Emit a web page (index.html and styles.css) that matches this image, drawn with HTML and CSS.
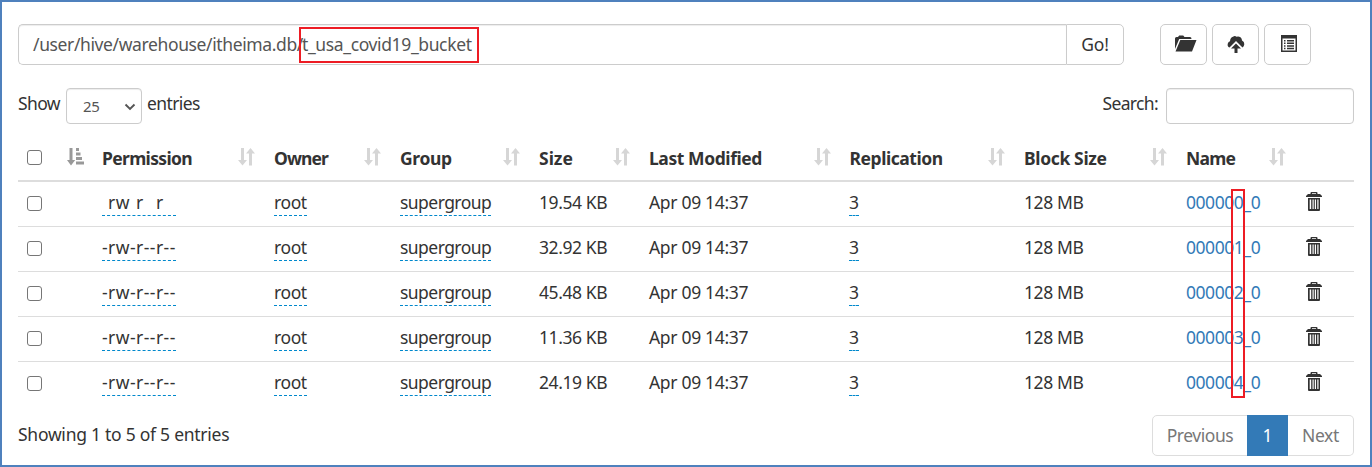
FILE: index.html
```
<!DOCTYPE html>
<html lang="en">
<head>
<meta charset="utf-8">
<title>Browse Directory</title>
<link rel="stylesheet" href="styles.css">
</head>
<body>
<svg class="defs" width="0" height="0">
  <symbol id="sort" viewBox="0 0 17 18"><path d="M3 0h3v12h3l-4.500 5.500L0 12h3zM11 17.500v-12H8L12.500 0 17 5.500h-3v12z"/></symbol>
  <symbol id="sorted" viewBox="0 0 17 18"><path d="M2.500 0h3v12h2.700L4 17.500 0 12h2.500zM9 0h3v3H9zM9 4.500h4.500v3H9zM9 9h6v3H9zM9 13.500h8v3H9z"/></symbol>
  <symbol id="trash" viewBox="0 0 16 19"><path fill-rule="evenodd" d="M4.500 2V1Q4.500 0 5.500 0h5q1 0 1 1v1H14l2 2v1H0V4l2-2zM6 2h4v-.8H6zM2 6h12v12q0 1-1 1H3q-1 0-1-1zM3.700 7.500V17h1.500V7.500zM6.500 7.500V17h1.200V7.500zM8.800 7.500V17H10V7.500zM11.300 7.500V17h1.200V7.500z"/></symbol>
</svg>
<main class="page">
  <div class="toolbar">
    <div class="path"><div class="path-input"><span class="dir">/user/hive/warehouse/itheima.db/</span><span class="leaf">t_usa_covid19_bucket</span></div><button class="go">Go!</button></div>
    <div class="actions">
      <button class="btn"><svg width="23" height="18" viewBox="0 0 23 18"><path d="M1 14V3.500Q1 2 2.500 2H4l1.200-1.500h4L10.500 2H16q1.500 0 1.500 2H5.200zM6.300 5H22.500L18 16.500H1.500z"/></svg></button>
      <button class="btn"><svg width="18" height="18" viewBox="0 0 18 18"><path d="M2.500 12.500Q0 11.500 .8 8.500 1.400 6.500 3 6.200 3.300 2.500 6 1.700 8 .5 9.500 1.800q2-1 4 .5 1.500 1.200 1.500 3.200 2.500 1 2.300 3.800-.3 2.200-1.800 3.200L9 6zM9 8.500l5 5H10.500V18h-3v-4.500H4z"/></svg></button>
      <button class="btn"><svg width="18" height="18" viewBox="0 0 18 18"><path fill-rule="evenodd" d="M1 0h16v17H1zM2.500 3.500v12h13v-12zM4 5h1.500v1.500H4zM7 5h7v1.500H7zM4 7.600h1.500v1.500H4zM7 7.600h7v1.500H7zM4 10.200h1.500v1.500H4zM7 10.200h7v1.500H7zM4 12.800h1.500v1.500H4zM7 12.800h7v1.500H7z"/></svg></button>
    </div>
  </div>
  <div class="controls">
    <label class="length"><span class="show">Show</span><span class="select"><span>25</span><svg width="12" height="8" viewBox="0 0 12 8"><path d="M1.500 1.500L6 6l4.500-4.500" fill="none" stroke="#555" stroke-width="1.900"/></svg></span><span class="ent">entries</span></label>
    <label class="search"><span>Search:</span><span class="field"></span></label>
  </div>
  <div class="table">
    <div class="row head">
      <div class="cell"><i class="check"></i><svg class="sort on"><use href="#sorted"/></svg></div>
      <div class="cell"><b class="h-perm">Permission</b><svg class="sort"><use href="#sort"/></svg></div>
      <div class="cell"><b class="h-owner">Owner</b><svg class="sort"><use href="#sort"/></svg></div>
      <div class="cell"><b class="h-group">Group</b><svg class="sort"><use href="#sort"/></svg></div>
      <div class="cell"><b class="h-size">Size</b><svg class="sort"><use href="#sort"/></svg></div>
      <div class="cell"><b class="h-mod">Last Modified</b><svg class="sort"><use href="#sort"/></svg></div>
      <div class="cell"><b class="h-rep">Replication</b><svg class="sort"><use href="#sort"/></svg></div>
      <div class="cell"><b class="h-block">Block Size</b><svg class="sort"><use href="#sort"/></svg></div>
      <div class="cell"><b class="h-name">Name</b><svg class="sort"><use href="#sort"/></svg></div>
      <div class="cell"></div>
    </div>
    <div class="row first"><div class="cell"><i class="check"></i></div><div class="cell"><span class="edit perm"><s>-</s>rw<s>-</s>r<s>--</s>r<s>--</s></span></div><div class="cell"><span class="edit owner">root</span></div><div class="cell"><span class="edit group">supergroup</span></div><div class="cell"><span class="size">19.54 KB</span></div><div class="cell"><span class="mod">Apr 09 14:37</span></div><div class="cell"><span class="edit rep">3</span></div><div class="cell"><span class="block">128 MB</span></div><div class="cell"><a class="name">000000_0</a></div><div class="cell"><svg class="trash"><use href="#trash"/></svg></div></div>
    <div class="row"><div class="cell"><i class="check"></i></div><div class="cell"><span class="edit perm">-rw-r--r--</span></div><div class="cell"><span class="edit owner">root</span></div><div class="cell"><span class="edit group">supergroup</span></div><div class="cell"><span class="size">32.92 KB</span></div><div class="cell"><span class="mod">Apr 09 14:37</span></div><div class="cell"><span class="edit rep">3</span></div><div class="cell"><span class="block">128 MB</span></div><div class="cell"><a class="name">000001_0</a></div><div class="cell"><svg class="trash"><use href="#trash"/></svg></div></div>
    <div class="row"><div class="cell"><i class="check"></i></div><div class="cell"><span class="edit perm">-rw-r--r--</span></div><div class="cell"><span class="edit owner">root</span></div><div class="cell"><span class="edit group">supergroup</span></div><div class="cell"><span class="size">45.48 KB</span></div><div class="cell"><span class="mod">Apr 09 14:37</span></div><div class="cell"><span class="edit rep">3</span></div><div class="cell"><span class="block">128 MB</span></div><div class="cell"><a class="name">000002_0</a></div><div class="cell"><svg class="trash"><use href="#trash"/></svg></div></div>
    <div class="row"><div class="cell"><i class="check"></i></div><div class="cell"><span class="edit perm">-rw-r--r--</span></div><div class="cell"><span class="edit owner">root</span></div><div class="cell"><span class="edit group">supergroup</span></div><div class="cell"><span class="size">11.36 KB</span></div><div class="cell"><span class="mod">Apr 09 14:37</span></div><div class="cell"><span class="edit rep">3</span></div><div class="cell"><span class="block">128 MB</span></div><div class="cell"><a class="name">000003_0</a></div><div class="cell"><svg class="trash"><use href="#trash"/></svg></div></div>
    <div class="row"><div class="cell"><i class="check"></i></div><div class="cell"><span class="edit perm">-rw-r--r--</span></div><div class="cell"><span class="edit owner">root</span></div><div class="cell"><span class="edit group">supergroup</span></div><div class="cell"><span class="size">24.19 KB</span></div><div class="cell"><span class="mod">Apr 09 14:37</span></div><div class="cell"><span class="edit rep">3</span></div><div class="cell"><span class="block">128 MB</span></div><div class="cell"><a class="name">000004_0</a></div><div class="cell"><svg class="trash"><use href="#trash"/></svg></div></div>
  </div>
  <div class="footer">
    <span class="info">Showing 1 to 5 of 5 entries</span>
    <div class="pager"><span class="prev">Previous</span><span class="current">1</span><span class="next">Next</span></div>
  </div>
  <div class="mark mark-path"></div>
  <div class="mark mark-names"></div>
</main>
</body>
</html>
```
FILE: styles.css
```
* { box-sizing: border-box; }
body { margin: 0; font: 17.5px/24px "Noto Sans", sans-serif; color: #333; background: #fff; }
.defs { position: absolute; }
svg { display: block; fill: #333; }
.page { position: relative; width: 1372px; height: 467px; border: 2px solid #4f81bd; padding: 22px 16px 0; overflow: hidden; white-space: nowrap; }
button { font: inherit; color: inherit; background: #fff; border: 1px solid #ccc; padding: 0; }
.toolbar { display: flex; height: 41px; }
.path { display: flex; width: 1106px; }
.path-input { flex: 1; display: flex; align-items: center; padding: 0 0 2px 14px; border: 1px solid #ccc; border-right: 0; border-radius: 5px 0 0 5px; box-shadow: inset 0 1px 1px rgba(0,0,0,.075); color: #555; }
.dir { width: 269px; letter-spacing: -.38px; }
.leaf { letter-spacing: -.37px; }
.go { width: 58px; border-radius: 0 5px 5px 0; letter-spacing: -.1px; padding-bottom: 2px; }
.actions { display: flex; gap: 5px; margin-left: 36px; }
.btn { width: 47px; border-radius: 5px; display: flex; align-items: center; justify-content: center; padding: 0 0 1px 4px; }
.btn + .btn { padding-left: 0; }
.btn + .btn + .btn { padding-left: 2px; }
.controls { display: flex; justify-content: space-between; margin-top: 23px; height: 36px; }
.length, .search { display: flex; }
.length > span, .search > span { line-height: 31px; }
.show { width: 48px; letter-spacing: -.6px; }
.select { display: flex; align-items: center; justify-content: space-between; width: 76px; border: 1px solid #ccc; border-radius: 4px; padding: 0 5px 0 16px; font-size: 15px; letter-spacing: -.4px; color: #555; box-shadow: inset 0 1px 1px rgba(0,0,0,.075); }
.select svg { margin-top: 2px; }
.ent { margin-left: 5px; letter-spacing: -.6px; }
.search { letter-spacing: -.65px; }
.field { width: 188px; margin-left: 8px; border: 1px solid #ccc; border-radius: 4px; box-shadow: inset 0 1px 1px rgba(0,0,0,.075); }
.table { margin-top: 11px; }
.row { display: grid; grid-template-columns: 74px 172px 126px 139px 110px 201px 174px 162px 121px 57px; height: 45px; border-top: 1px solid #ddd; }
.head { height: 45px; border: 0; }
.first { height: 46px; border-top: 2px solid #ddd; }
.cell { display: flex; align-items: flex-start; padding: 8px 9px 0 10px; }
.head .cell { padding-top: 11px; }
.check { width: 15px; height: 15px; margin: 6px 0 0 -1px; border: 1px solid #767676; border-radius: 3px; background: #fff; }
.head .check { margin-top: 4px; }
.sort { width: 17px; height: 18px; margin: 2px 0 0 auto; fill: #d6d6d6; }
.sort.on { fill: #999; margin-right: -1px; }
.cell:nth-child(9) .sort { margin-right: 2px; }
.h-perm { letter-spacing: -.65px; }
.h-owner { letter-spacing: -.9px; }
.h-group { letter-spacing: -.35px; }
.h-mod { letter-spacing: -.42px; }
.h-rep { letter-spacing: -.45px; margin-left: -.5px; }
.h-block { letter-spacing: -.35px; }
.h-name { letter-spacing: -.75px; }
.edit { border-bottom: 1px dashed #08c; height: 26px; }
.perm { width: 74px; letter-spacing: .45px; }
s { text-decoration: none; color: transparent; }
.owner { letter-spacing: -.4px; }
.group { letter-spacing: -.55px; }
.size { letter-spacing: -.42px; }
.mod { letter-spacing: -.32px; }
.rep { letter-spacing: -.5px; margin-left: -1px; }
.block { letter-spacing: -.4px; }
.name { color: #337ab7; letter-spacing: -.45px; }
.trash { width: 16px; height: 19px; margin: 2px 0 0 -1px; }
.footer { display: flex; justify-content: space-between; margin-top: 9px; }
.info { line-height: 38px; letter-spacing: -.26px; }
.pager { display: flex; height: 41px; line-height: 38px; color: #777; text-align: center; }
.pager span { border: 1px solid #ddd; }
.prev { width: 96px; border-radius: 5px 0 0 5px; letter-spacing: -.45px; }
.pager .current { width: 41px; margin-left: -1px; background: #337ab7; color: #fff; border-color: #337ab7; }
.next { width: 66px; border-left: 0 !important; border-radius: 0 5px 5px 0; letter-spacing: -.3px; }
.mark { position: absolute; border: 2px solid #ed1c24; }
.mark-path { left: 297px; top: 25px; width: 180px; height: 36px; }
.mark-names { left: 1229px; top: 187px; width: 14px; height: 209px; }
```
